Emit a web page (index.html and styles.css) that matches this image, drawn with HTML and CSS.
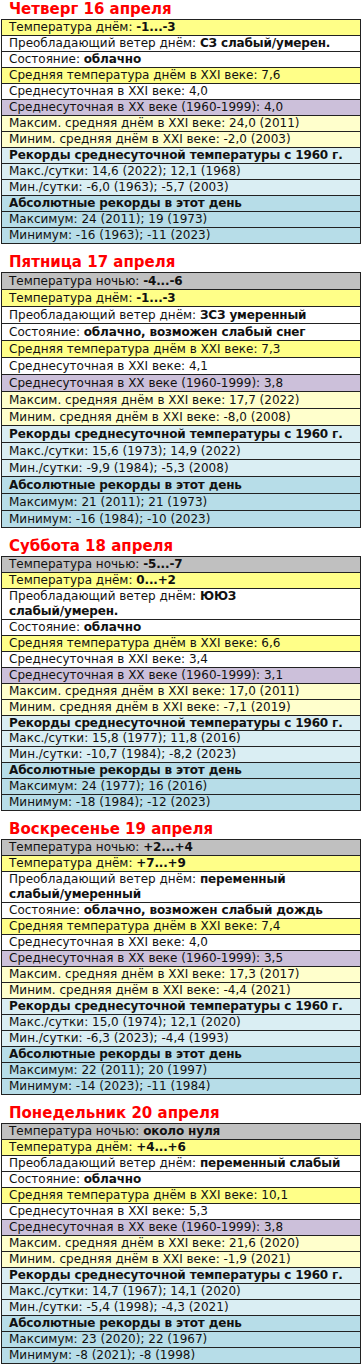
FILE: index.html
```html
<!DOCTYPE html>
<html lang="ru">
<head>
<meta charset="utf-8">
<title>Погода</title>
<link rel="stylesheet" href="styles.css">
</head>
<body>
<div class="page">

<section class="day">
<h2 class="day-title">Четверг 16 апреля</h2>
<table class="wx">
<tr class="r-daytemp"><td>Температура днём: <b>-1...-3</b></td></tr>
<tr class="r-white"><td>Преобладающий ветер днём: <b>СЗ слабый/умерен.</b></td></tr>
<tr class="r-white"><td>Состояние: <b>облачно</b></td></tr>
<tr class="r-avg"><td>Средняя температура днём в XXI веке: 7,6</td></tr>
<tr class="r-white"><td>Среднесуточная в XXI веке: 4,0</td></tr>
<tr class="r-xx"><td>Среднесуточная в XX веке (1960-1999): 4,0</td></tr>
<tr class="r-cream"><td>Максим. средняя днём в XXI веке: 24,0 (2011)</td></tr>
<tr class="r-cream"><td>Миним. средняя днём в XXI веке: -2,0 (2003)</td></tr>
<tr class="r-rec"><td><b>Рекорды среднесуточной температуры с 1960 г.</b></td></tr>
<tr class="r-rec"><td>Макс./сутки: 14,6 (2022); 12,1 (1968)</td></tr>
<tr class="r-rec"><td>Мин./сутки: -6,0 (1963); -5,7 (2003)</td></tr>
<tr class="r-abs"><td><b>Абсолютные рекорды в этот день</b></td></tr>
<tr class="r-abs"><td>Максимум: 24 (2011); 19 (1973)</td></tr>
<tr class="r-abs"><td>Минимум: -16 (1963); -11 (2023)</td></tr>
</table>
</section>

<section class="day">
<h2 class="day-title">Пятница 17 апреля</h2>
<table class="wx wx-tall">
<tr class="r-night"><td>Температура ночью: <b>-4...-6</b></td></tr>
<tr class="r-daytemp"><td>Температура днём: <b>-1...-3</b></td></tr>
<tr class="r-white"><td>Преобладающий ветер днём: <b>ЗСЗ умеренный</b></td></tr>
<tr class="r-white"><td>Состояние: <b>облачно, возможен слабый снег</b></td></tr>
<tr class="r-avg"><td>Средняя температура днём в XXI веке: 7,3</td></tr>
<tr class="r-white"><td>Среднесуточная в XXI веке: 4,1</td></tr>
<tr class="r-xx"><td>Среднесуточная в XX веке (1960-1999): 3,8</td></tr>
<tr class="r-cream"><td>Максим. средняя днём в XXI веке: 17,7 (2022)</td></tr>
<tr class="r-cream"><td>Миним. средняя днём в XXI веке: -8,0 (2008)</td></tr>
<tr class="r-rec"><td><b>Рекорды среднесуточной температуры с 1960 г.</b></td></tr>
<tr class="r-rec"><td>Макс./сутки: 15,6 (1973); 14,9 (2022)</td></tr>
<tr class="r-rec"><td>Мин./сутки: -9,9 (1984); -5,3 (2008)</td></tr>
<tr class="r-abs"><td><b>Абсолютные рекорды в этот день</b></td></tr>
<tr class="r-abs"><td>Максимум: 21 (2011); 21 (1973)</td></tr>
<tr class="r-abs"><td>Минимум: -16 (1984); -10 (2023)</td></tr>
</table>
</section>

<section class="day">
<h2 class="day-title">Суббота 18 апреля</h2>
<table class="wx wx-mid">
<tr class="r-night"><td>Температура ночью: <b>-5...-7</b></td></tr>
<tr class="r-daytemp"><td>Температура днём: <b>0...+2</b></td></tr>
<tr class="r-white"><td>Преобладающий ветер днём: <b>ЮЮЗ<br>слабый/умерен.</b></td></tr>
<tr class="r-white"><td>Состояние: <b>облачно</b></td></tr>
<tr class="r-avg"><td>Средняя температура днём в XXI веке: 6,6</td></tr>
<tr class="r-white"><td>Среднесуточная в XXI веке: 3,4</td></tr>
<tr class="r-xx"><td>Среднесуточная в XX веке (1960-1999): 3,1</td></tr>
<tr class="r-cream"><td>Максим. средняя днём в XXI веке: 17,0 (2011)</td></tr>
<tr class="r-cream"><td>Миним. средняя днём в XXI веке: -7,1 (2019)</td></tr>
<tr class="r-rec"><td><b>Рекорды среднесуточной температуры с 1960 г.</b></td></tr>
<tr class="r-rec"><td>Макс./сутки: 15,8 (1977); 11,8 (2016)</td></tr>
<tr class="r-rec"><td>Мин./сутки: -10,7 (1984); -8,2 (2023)</td></tr>
<tr class="r-abs"><td><b>Абсолютные рекорды в этот день</b></td></tr>
<tr class="r-abs"><td>Максимум: 24 (1977); 16 (2016)</td></tr>
<tr class="r-abs"><td>Минимум: -18 (1984); -12 (2023)</td></tr>
</table>
</section>

<section class="day">
<h2 class="day-title">Воскресенье 19 апреля</h2>
<table class="wx wx-mid">
<tr class="r-night"><td>Температура ночью: <b>+2...+4</b></td></tr>
<tr class="r-daytemp"><td>Температура днём: <b>+7...+9</b></td></tr>
<tr class="r-white"><td>Преобладающий ветер днём: <b>переменный<br>слабый/умеренный</b></td></tr>
<tr class="r-white"><td>Состояние: <b>облачно, возможен слабый дождь</b></td></tr>
<tr class="r-avg"><td>Средняя температура днём в XXI веке: 7,4</td></tr>
<tr class="r-white"><td>Среднесуточная в XXI веке: 4,0</td></tr>
<tr class="r-xx"><td>Среднесуточная в XX веке (1960-1999): 3,5</td></tr>
<tr class="r-cream"><td>Максим. средняя днём в XXI веке: 17,3 (2017)</td></tr>
<tr class="r-cream"><td>Миним. средняя днём в XXI веке: -4,4 (2021)</td></tr>
<tr class="r-rec"><td><b>Рекорды среднесуточной температуры с 1960 г.</b></td></tr>
<tr class="r-rec"><td>Макс./сутки: 15,0 (1974); 12,1 (2020)</td></tr>
<tr class="r-rec"><td>Мин./сутки: -6,3 (2023); -4,4 (1993)</td></tr>
<tr class="r-abs"><td><b>Абсолютные рекорды в этот день</b></td></tr>
<tr class="r-abs"><td>Максимум: 22 (2011); 20 (1997)</td></tr>
<tr class="r-abs"><td>Минимум: -14 (2023); -11 (1984)</td></tr>
</table>
</section>

<section class="day">
<h2 class="day-title">Понедельник 20 апреля</h2>
<table class="wx">
<tr class="r-night"><td>Температура ночью: <b>около нуля</b></td></tr>
<tr class="r-daytemp"><td>Температура днём: <b>+4...+6</b></td></tr>
<tr class="r-white"><td>Преобладающий ветер днём: <b>переменный слабый</b></td></tr>
<tr class="r-white"><td>Состояние: <b>облачно</b></td></tr>
<tr class="r-avg"><td>Средняя температура днём в XXI веке: 10,1</td></tr>
<tr class="r-white"><td>Среднесуточная в XXI веке: 5,3</td></tr>
<tr class="r-xx"><td>Среднесуточная в XX веке (1960-1999): 3,8</td></tr>
<tr class="r-cream"><td>Максим. средняя днём в XXI веке: 21,6 (2020)</td></tr>
<tr class="r-cream"><td>Миним. средняя днём в XXI веке: -1,9 (2021)</td></tr>
<tr class="r-rec"><td><b>Рекорды среднесуточной температуры с 1960 г.</b></td></tr>
<tr class="r-rec"><td>Макс./сутки: 14,7 (1967); 14,1 (2020)</td></tr>
<tr class="r-rec"><td>Мин./сутки: -5,4 (1998); -4,3 (2021)</td></tr>
<tr class="r-abs"><td><b>Абсолютные рекорды в этот день</b></td></tr>
<tr class="r-abs"><td>Максимум: 23 (2020); 22 (1967)</td></tr>
<tr class="r-abs"><td>Минимум: -8 (2021); -8 (1998)</td></tr>
</table>
</section>

</div>
</body>
</html>
```

FILE: styles.css
```css
html, body {
  margin: 0;
  padding: 0;
  background: #ffffff;
}

.page {
  padding: 0 1px;
  font-family: "DejaVu Sans", Verdana, sans-serif;
  color: #111111;
}

.day {
  margin-top: 9px;
}

.day:first-child {
  margin-top: 0;
}

.day-title {
  margin: 0;
  padding-left: 8px;
  font-size: 15px;
  line-height: 19px;
  font-weight: bold;
  color: #ff0000;
}

.wx {
  width: 360px;
  border-collapse: collapse;
  font-size: 12px;
  line-height: 15px;
}

.wx td {
  border: 1px solid #222222;
  padding: 0 4px 0 7px;
}

.wx-tall td {
  padding-top: 1px;
}

.wx-mid {
  line-height: 14.95px;
}

.wx b {
  font-weight: bold;
  letter-spacing: -0.15px;
}

.r-night { background: #c0c0c0; }
.r-daytemp { background: #ffff88; }
.r-white { background: #ffffff; }
.r-avg { background: #ffff88; }
.r-xx { background: #ccc0da; }
.r-cream { background: #ffffcc; }
.r-rec { background: #daeef3; }
.r-abs { background: #b7dde8; }
```
